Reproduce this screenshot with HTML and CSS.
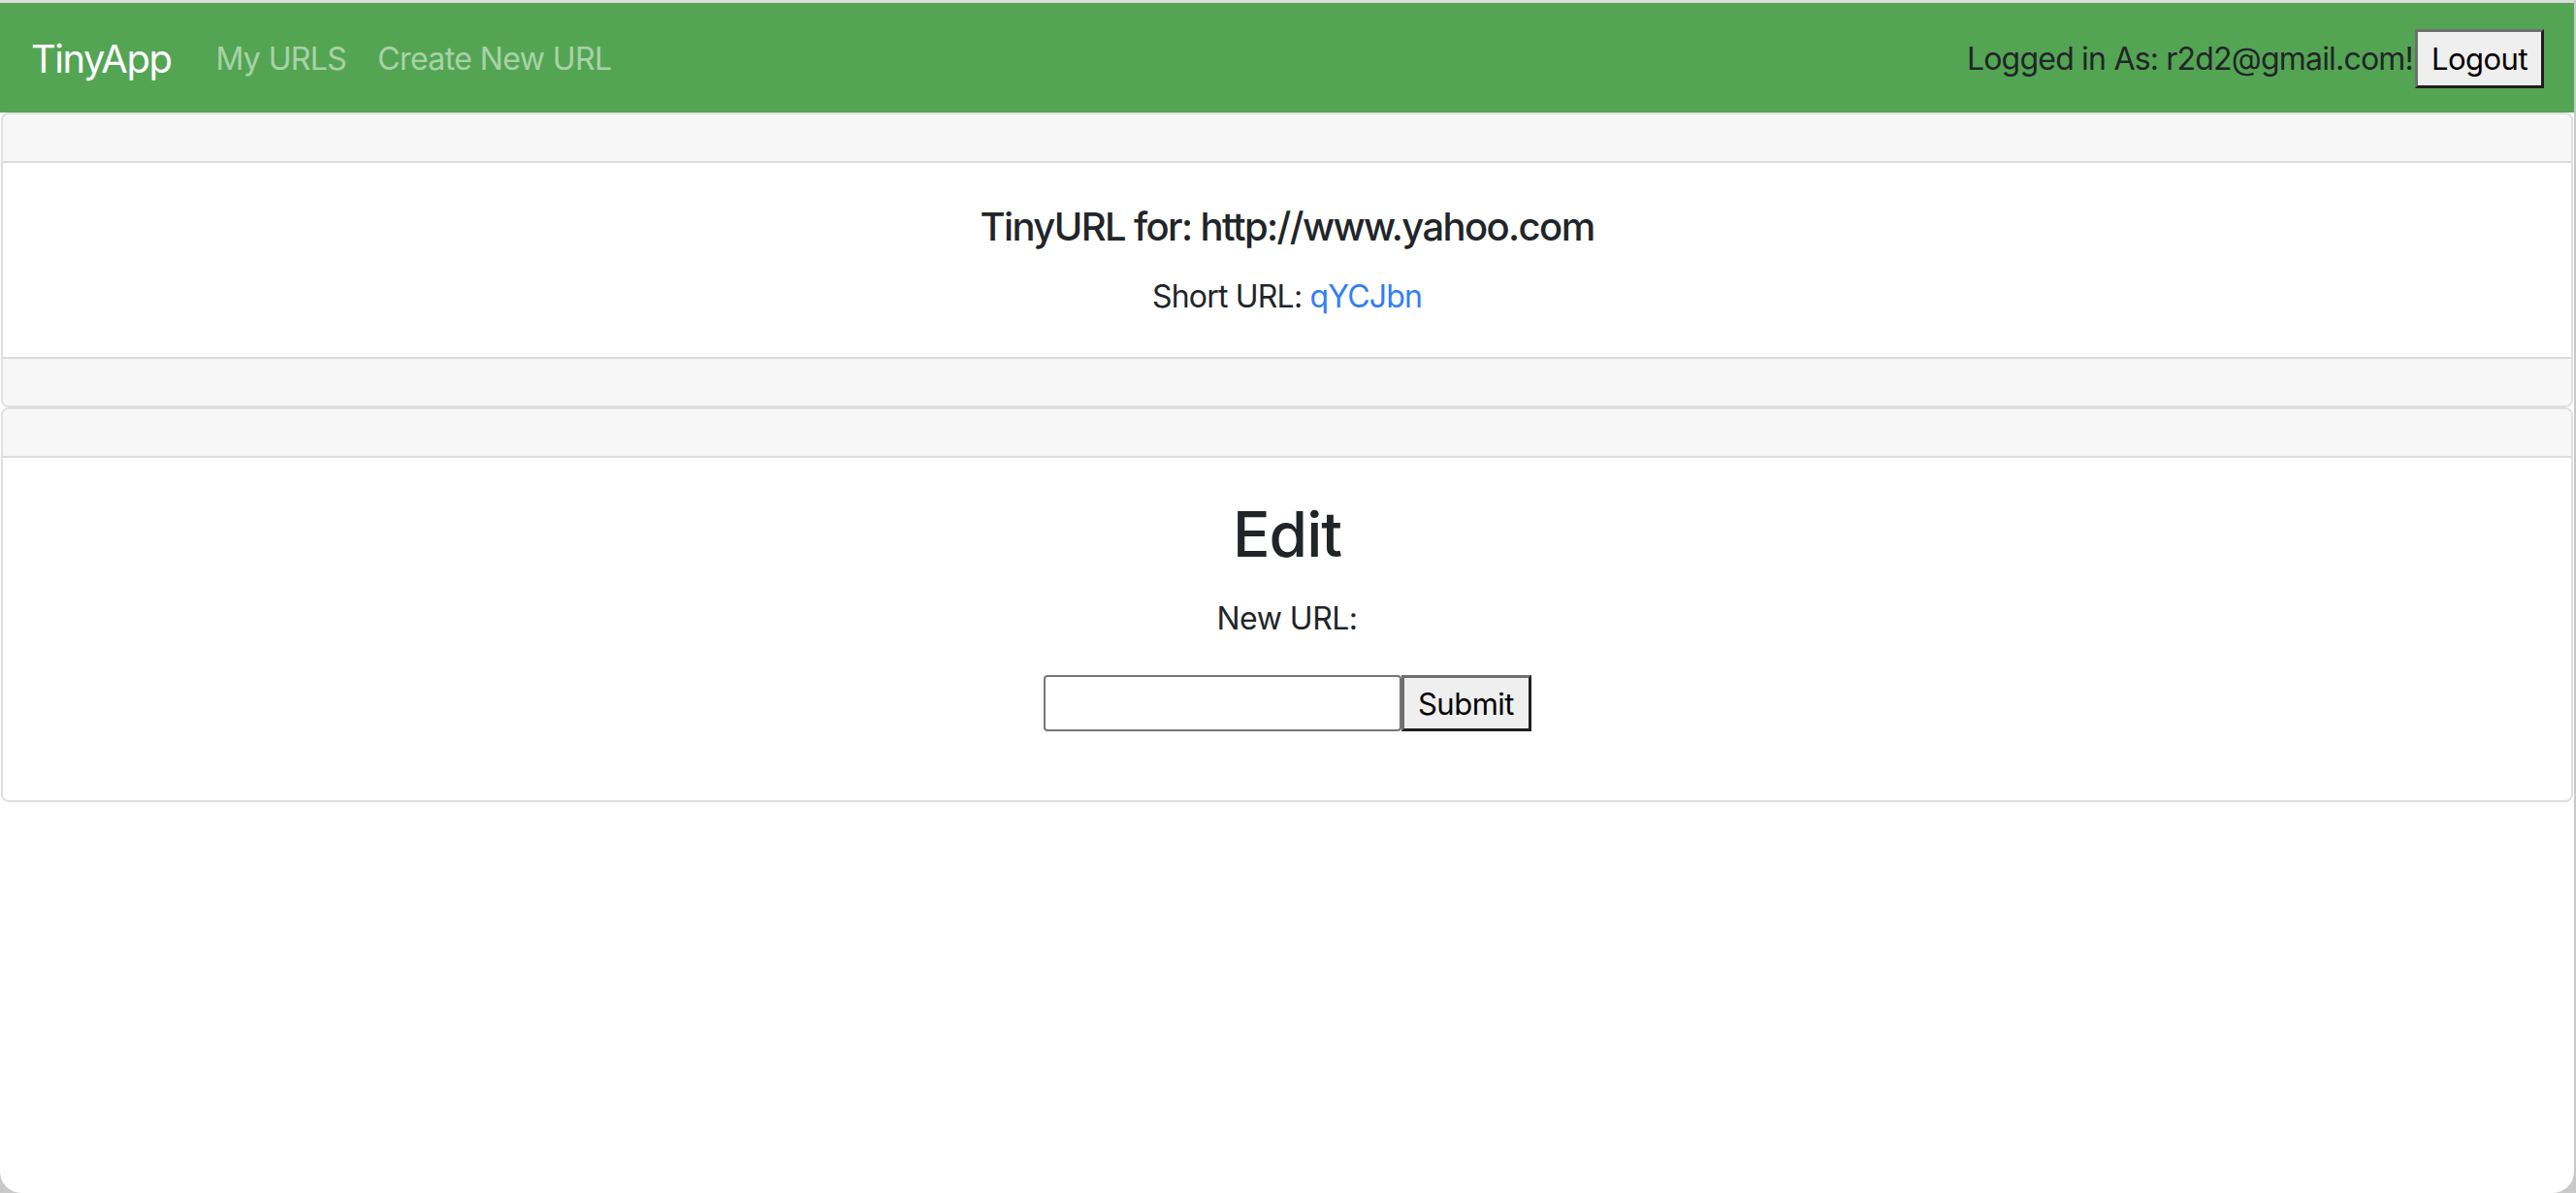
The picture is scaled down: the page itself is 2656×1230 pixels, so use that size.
FILE: index.html
```html
<!DOCTYPE html>
<html lang="en">
<head>
<meta charset="utf-8">
<title>TinyApp</title>
<link rel="stylesheet" href="styles.css">
</head>
<body>
<div class="window">
  <nav class="navbar">
    <a class="brand" href="#">TinyApp</a>
    <div class="nav-links">
      <a class="nav-link" href="#">My URLS</a>
      <a class="nav-link" href="#">Create New URL</a>
    </div>
    <div class="user">
      <span class="user-text">Logged in As: r2d2@gmail.com!</span>
      <button class="btn btn-logout">Logout</button>
    </div>
  </nav>

  <div class="card">
    <div class="card-header"></div>
    <div class="card-body">
      <h5 class="card-title">TinyURL for: http://www.yahoo.com</h5>
      <p class="card-text">Short URL: <a class="link" href="#">qYCJbn</a></p>
    </div>
    <div class="card-footer"></div>
  </div>

  <div class="card">
    <div class="card-header"></div>
    <div class="card-body">
      <h2 class="edit-title">Edit</h2>
      <form class="edit-form">
        <label class="edit-label">New URL:</label>
        <div class="edit-row">
          <input class="edit-input" type="text">
          <button class="btn btn-submit" type="button">Submit</button>
        </div>
      </form>
    </div>
  </div>
</div>
</body>
</html>
```

FILE: styles.css
```css
html, body {
  margin: 0;
  padding: 0;
}

body {
  background: #c9c9c9;
  font-family: Inter, "Liberation Sans", Arial, sans-serif;
  color: #212529;
}

.window {
  box-sizing: border-box;
  width: 2654px;
  height: 1230px;
  background: #ffffff;
  border-top: 3px solid #dcdcdc;
  padding-left: 1px;
  border-radius: 0 0 22px 22px;
  overflow: hidden;
}

.navbar {
  display: flex;
  align-items: center;
  height: 113px;
  margin-left: -1px;
  padding: 2px 31px 0 32px;
  box-sizing: border-box;
  background: #54a553;
}

.brand {
  font-size: 40px;
  color: #ffffff;
  text-decoration: none;
  margin-right: 30px;
  letter-spacing: -1.5px;
}

.nav-links {
  display: flex;
}

.nav-link {
  font-size: 32px;
  color: rgba(255, 255, 255, 0.5);
  text-decoration: none;
  padding: 0 16px;
  letter-spacing: -0.6px;
}

.user {
  margin-left: auto;
  display: flex;
  align-items: center;
}

.user-text {
  font-size: 32px;
  color: #212529;
  letter-spacing: -0.8px;
}

.btn {
  font-family: Inter, "Liberation Sans", Arial, sans-serif;
  font-size: 31px;
  color: #000000;
  background: #efefef;
  border-style: solid;
  border-width: 3px;
  border-color: #6f6f6f #1f1f1f #1f1f1f #6f6f6f;
  padding: 0 12px;
  margin: 0;
  letter-spacing: -0.5px;
}

.btn-logout {
  height: 61px;
  width: 133px;
  margin-left: 2px;
}

.card {
  border: 2px solid #dfdfdf;
  border-radius: 8px;
  overflow: hidden;
  margin-right: 1px;
}

.card-header {
  height: 48px;
  background: #f7f7f7;
  border-bottom: 2px solid #dcdcdc;
}

.card-footer {
  height: 48px;
  background: #f7f7f7;
  border-top: 2px solid #dcdcdc;
}

.card-body {
  padding: 40px;
  text-align: center;
}

.card-title {
  margin: 2px 0 24px;
  font-size: 40px;
  font-weight: 500;
  line-height: 48px;
  letter-spacing: -1.6px;
}

.card-text {
  margin: 0 0 -2px;
  font-size: 32px;
  line-height: 48px;
  letter-spacing: -0.8px;
}

.link {
  color: #317ef6;
  text-decoration: none;
}

.edit-title {
  margin: 0 0 25px;
  font-size: 64px;
  font-weight: 500;
  line-height: 77px;
  letter-spacing: -1px;
}

.edit-form {
  margin: 0 0 31px;
}

.edit-label {
  display: block;
  font-size: 32px;
  line-height: 48px;
  margin-bottom: 34px;
  letter-spacing: -0.5px;
}

.edit-row {
  display: flex;
  justify-content: center;
}

.edit-input {
  box-sizing: border-box;
  width: 369px;
  height: 58px;
  margin: 0;
  border: 2px solid #767676;
  border-radius: 4px;
  background: #ffffff;
}

.btn-submit {
  box-sizing: border-box;
  height: 58px;
  width: 134px;
}
```
